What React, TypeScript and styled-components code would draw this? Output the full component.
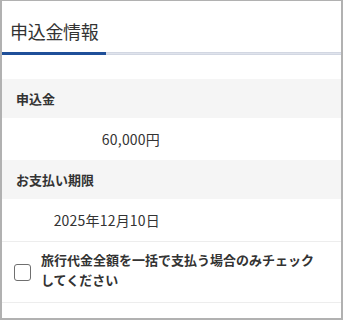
import React, { useState } from "react";
import styled, { createGlobalStyle } from "styled-components";

const GlobalStyle = createGlobalStyle`
  html, body {
    margin: 0;
    padding: 0;
    background: #fff;
  }
  body {
    font-family: "Noto Sans CJK JP", "Noto Sans", sans-serif;
    color: #333;
  }
`;

const rows = [
  { label: "申込金", value: "60,000円" },
  { label: "お支払い期限", value: "2025年12月10日" },
];

const App = () => {
  const [checked, setChecked] = useState(false);

  return (
    <>
      <GlobalStyle />
      <Frame>
        <TabHeader>
          <TabTitle>申込金情報</TabTitle>
        </TabHeader>
        <TabTrack>
          <TabIndicator />
        </TabTrack>

        <Section>
          {rows.map((row) => (
            <React.Fragment key={row.label}>
              <LabelRow>{row.label}</LabelRow>
              <ValueRow>
                <ValueCell>{row.value}</ValueCell>
              </ValueRow>
            </React.Fragment>
          ))}
        </Section>

        <CheckRow onClick={() => setChecked(!checked)}>
          <CheckBox $checked={checked} />
          <CheckText>旅行代金全額を一括で支払う場合のみチェックしてください</CheckText>
        </CheckRow>
      </Frame>
    </>
  );
};

const Frame = styled.div`
  box-sizing: border-box;
  width: 343px;
  height: 320px;
  border: 2px solid #b1b1b1;
  border-top-width: 1px;
  background: #fff;
  display: flex;
  flex-direction: column;
  overflow: hidden;
`;

const TabHeader = styled.div`
  padding: 18px 10px 9px 8px;
`;

const TabTitle = styled.div`
  font-size: 18px;
  line-height: 24px;
  font-weight: 400;
  color: #333;
  letter-spacing: -0.3px;
`;

const TabTrack = styled.div`
  height: 3px;
  background: #dfe3ec;
  border-top: 1px solid #d2d7e2;
  border-bottom: 1px solid #d2d7e2;
  box-sizing: border-box;
  position: relative;
`;

const TabIndicator = styled.div`
  position: absolute;
  left: 0;
  top: -1px;
  width: 104px;
  height: 3px;
  background: #1f4f99;
`;

const Section = styled.div`
  margin-top: 24px;
  display: flex;
  flex-direction: column;
`;

const LabelRow = styled.div`
  height: 39px;
  display: flex;
  align-items: center;
  padding: 0 14px;
  background: #f5f5f5;
  font-size: 13px;
  font-weight: 700;
  color: #333;
`;

const ValueRow = styled.div`
  height: 42px;
  display: flex;
  align-items: center;
  background: #fff;
`;

const ValueCell = styled.div`
  width: 158px;
  text-align: right;
  font-size: 14px;
  letter-spacing: 0.2px;
  color: #333;
`;

const CheckRow = styled.div`
  height: 60px;
  border-top: 1px solid #ededed;
  border-bottom: 1px solid #ededed;
  display: flex;
  align-items: center;
  padding: 0 16px 0 12px;
  gap: 10px;
  cursor: pointer;
`;

const CheckBox = styled.span<{ $checked: boolean }>`
  flex: none;
  box-sizing: border-box;
  width: 17px;
  height: 17px;
  border: 1.5px solid #6f6f6f;
  border-radius: 3px;
  background: ${(p) => (p.$checked ? "#1f4f99" : "#fff")};
`;

const CheckText = styled.div`
  font-size: 13px;
  font-weight: 700;
  line-height: 20px;
  color: #333;
  margin-top: -4px;
`;

export default App;
